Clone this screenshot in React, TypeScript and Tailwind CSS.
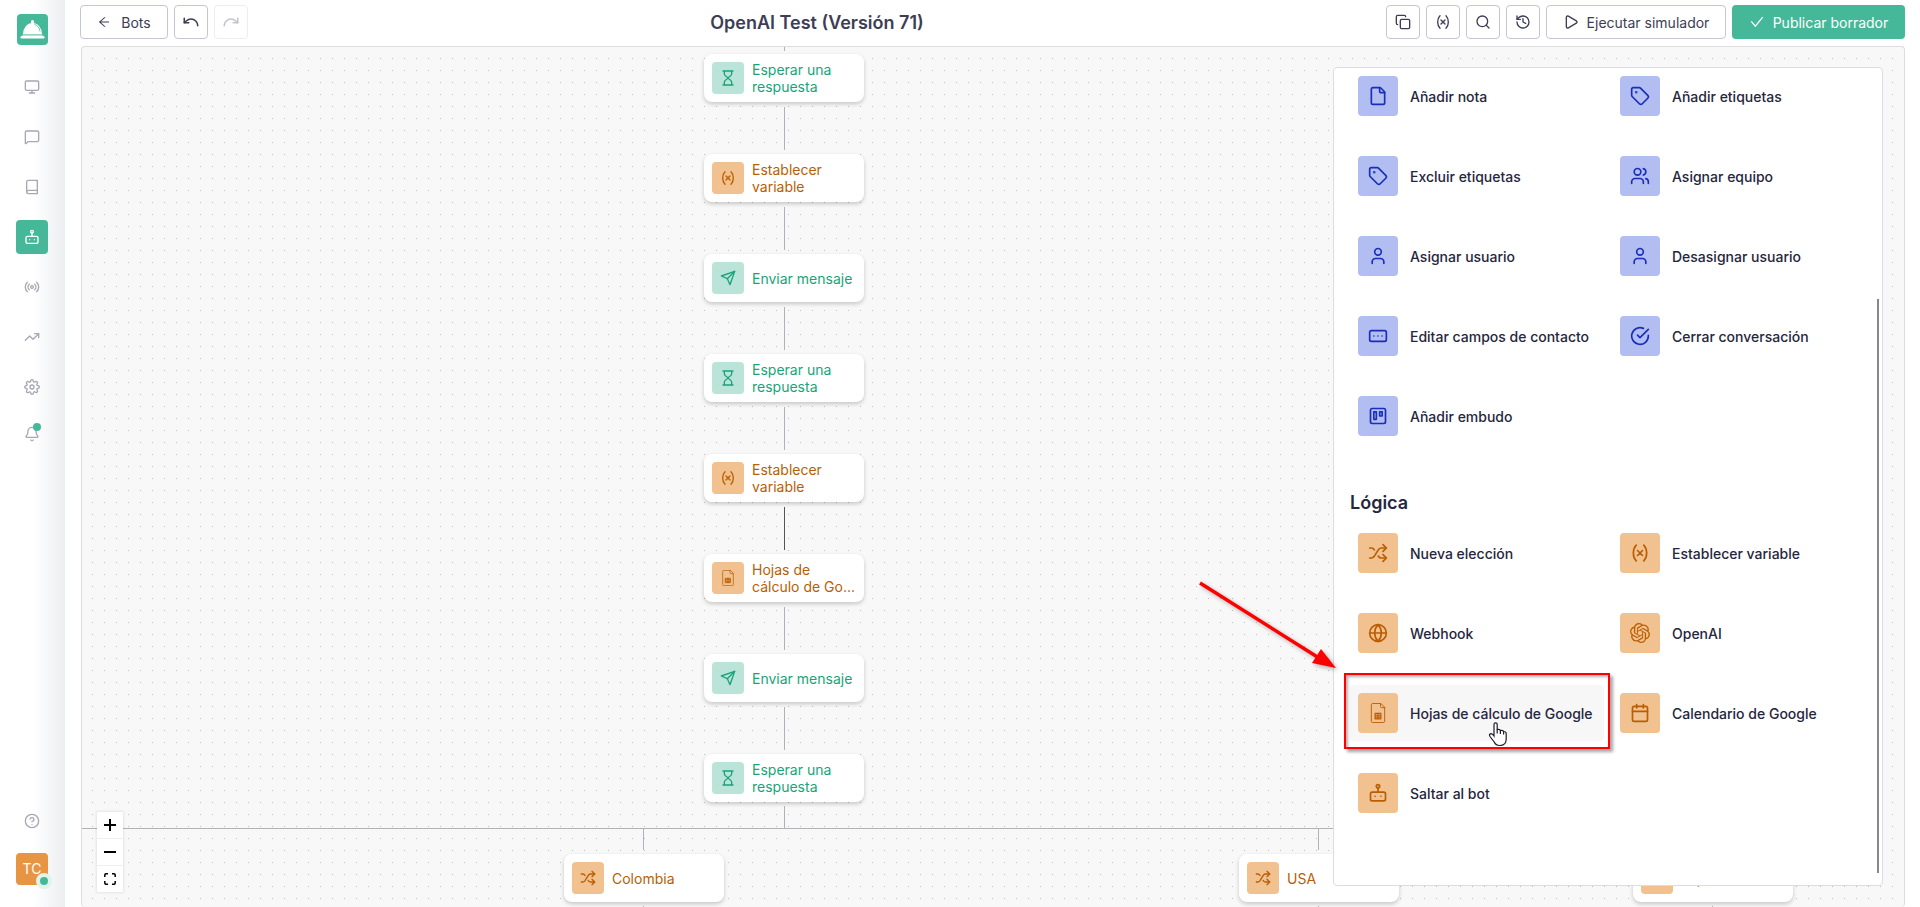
import type { ComponentType, ReactNode } from 'react';
import {
  Bell,
  Calendar,
  CircleHelp,
  Copy,
  File,
  Globe,
  History,
  MessageSquare,
  Monitor,
  Play,
  Redo,
  Search,
  Shuffle,
  Tag,
  TrendingUp,
  Trello,
  Undo,
  User,
  Users,
} from 'lucide-react';
import { AiOutlineArrowLeft, AiOutlineCheck } from 'react-icons/ai';
import { FiBook, FiCheckCircle, FiSend, FiSettings } from 'react-icons/fi';
import { SiOpenai } from 'react-icons/si';

type IconProps = { className?: string; size?: number; strokeWidth?: number };
type Icon = ComponentType<IconProps>;

function Svg({ size = 24, strokeWidth = 2, className, children }: IconProps & { children: ReactNode }) {
  return (
    <svg
      className={className}
      width={size}
      height={size}
      viewBox="0 0 24 24"
      fill="none"
      stroke="currentColor"
      strokeWidth={strokeWidth}
      strokeLinecap="round"
      strokeLinejoin="round"
    >
      {children}
    </svg>
  );
}

const BotIcon: Icon = (props) => (
  <Svg {...props}>
    <rect x="3" y="11" width="18" height="10.5" rx="2" />
    <circle cx="12" cy="4" r="2" />
    <path d="M12 6v5M8.500 16h.01M15.500 16h.01" />
  </Svg>
);

const BroadcastIcon: Icon = (props) => (
  <Svg {...props}>
    <circle cx="12" cy="12" r="2" />
    <path d="M16.2 7.8a6 6 0 0 1 0 8.4M7.8 16.2a6 6 0 0 1 0-8.4M19.1 4.9a10 10 0 0 1 0 14.2M4.9 19.1a10 10 0 0 1 0-14.2" />
  </Svg>
);

const HourglassIcon: Icon = (props) => (
  <Svg {...props}>
    <path d="M4.500 1.500h15M4.500 22.500h15M6.500 1.500v4.500c0 3 5.500 4.500 5.500 6s-5.500 3-5.500 6v4.500M17.500 1.500v4.500c0 3-5.500 4.500-5.500 6s5.500 3 5.500 6v4.500" />
  </Svg>
);

const VariableIcon: Icon = (props) => (
  <Svg {...props}>
    <path d="M7.500 21.500s-3.500-3.500-3.500-9.500 3.500-9.500 3.500-9.500M16.500 2.500s3.500 3.500 3.500 9.500-3.500 9.500-3.500 9.500M15 9l-6 6M9 9l6 6" />
  </Svg>
);

const FieldIcon: Icon = (props) => (
  <Svg {...props}>
    <rect x="2" y="5.5" width="20" height="13" rx="2" />
    <path d="M7 12h.01M12 12h.01M17 12h.01" />
  </Svg>
);

const SheetsIcon: Icon = ({ size, className }) => (
  <Svg size={size} className={className} strokeWidth={1.1}>
    <path d="M15 .600H5.500A1.500 1.500 0 0 0 4 2.100v19.800a1.500 1.500 0 0 0 1.500 1.500h13a1.500 1.500 0 0 0 1.500-1.500V5.600zM15 .600v3.500a1.500 1.500 0 0 0 1.500 1.500H20" />
    <path d="M8.500 12.500h7v6.500h-7zM8.500 14.700h7M8.500 16.900h7M12 12.500V19" strokeWidth="1.400" />
  </Svg>
);

const SendIcon: Icon = ({ size, className }) => <FiSend size={size} className={className} />;
const OpenAIIcon: Icon = ({ size, className }) => <SiOpenai size={size} className={className} />;
const CheckCircleIcon: Icon = ({ size, className }) => <FiCheckCircle size={size} className={className} />;
const BookIcon: Icon = ({ size }) => <FiBook size={size} />;
const SettingsIcon: Icon = ({ size }) => <FiSettings size={size} />;

const navItems: { label: string; icon: Icon; active?: boolean; dot?: boolean }[] = [
  { label: 'Panel', icon: Monitor },
  { label: 'Chats', icon: MessageSquare },
  { label: 'Contactos', icon: BookIcon },
  { label: 'Bots', icon: BotIcon, active: true },
  { label: 'Difusiones', icon: BroadcastIcon },
  { label: 'Informes', icon: TrendingUp },
  { label: 'Ajustes', icon: SettingsIcon },
  { label: 'Notificaciones', icon: Bell, dot: true },
];

type Tone = 'green' | 'orange' | 'blue';

const tones: Record<Tone, string> = {
  green: 'bg-[#bbe4d9] text-[#1aa37a]',
  orange: 'bg-[#f1c18f] text-[#b95e04]',
  blue: 'bg-[#b2bdf2] text-[#1a2fb8]',
};

type FlowNode = { x: number; y: number; label: string; icon: Icon; tone: Tone };

const WAIT = { label: 'Esperar una respuesta', icon: HourglassIcon, tone: 'green' as Tone };
const SET_VAR = { label: 'Establecer variable', icon: VariableIcon, tone: 'orange' as Tone };
const SEND = { label: 'Enviar mensaje', icon: SendIcon, tone: 'green' as Tone };
const SHEETS = { label: 'Hojas de cálculo\u00a0de\u00a0Go...', icon: SheetsIcon, tone: 'orange' as Tone };

const nodes: FlowNode[] = [
  ...[WAIT, SET_VAR, SEND, WAIT, SET_VAR, SHEETS, SEND, WAIT].map((n, i) => ({ ...n, x: 622, y: 7 + i * 100 })),
  { x: 482, y: 807, label: 'Colombia', icon: Shuffle, tone: 'orange' },
  { x: 1157, y: 807, label: 'USA', icon: Shuffle, tone: 'orange' },
  { x: 1551, y: 807, label: 'España', icon: Shuffle, tone: 'orange' },
];

const actions: { label: string; icon: Icon }[] = [
  { label: 'Añadir nota', icon: File },
  { label: 'Añadir etiquetas', icon: Tag },
  { label: 'Excluir etiquetas', icon: Tag },
  { label: 'Asignar equipo', icon: Users },
  { label: 'Asignar usuario', icon: User },
  { label: 'Desasignar usuario', icon: User },
  { label: 'Editar campos de contacto', icon: FieldIcon },
  { label: 'Cerrar conversación', icon: CheckCircleIcon },
  { label: 'Añadir embudo', icon: Trello },
];

const logic: { label: string; icon: Icon; hovered?: boolean }[] = [
  { label: 'Nueva elección', icon: Shuffle },
  { label: 'Establecer variable', icon: VariableIcon },
  { label: 'Webhook', icon: Globe },
  { label: 'OpenAI', icon: OpenAIIcon },
  { label: 'Hojas de cálculo de Google', icon: SheetsIcon, hovered: true },
  { label: 'Calendario de Google', icon: Calendar },
  { label: 'Saltar al bot', icon: BotIcon },
];

function Sidebar() {
  return (
    <aside className="flex w-[65px] shrink-0 flex-col items-center bg-linear-to-r from-white from-50% to-[#eceef0] pt-[14px] pr-px pb-[22px]">
      <a
        href="#"
        aria-label="Inicio"
        className="mb-[25px] flex size-[31px] items-center justify-center rounded bg-[#45b899] text-white"
      >
        <svg width="25" height="20" viewBox="0 0 25 20" fill="currentColor">
          <path d="M11 1.500a1.500 1.500 0 0 1 3 0V3h-3zM3 14a9.500 11 0 0 1 19 0z" />
          <path d="M14.500 4.500q5 1.500 5.500 7" fill="none" stroke="#45b899" strokeWidth="0.800" />
          <path d="M2.500 14.300h20v2h-20z" opacity="0.600" />
          <rect x="0.500" y="16" width="24" height="2.500" rx="1.200" />
        </svg>
      </a>
      <nav className="flex flex-col gap-4">
        {navItems.map(({ label, icon: NavIcon, active, dot }) => (
          <a
            key={label}
            href="#"
            aria-label={label}
            className={`relative flex w-8 items-center justify-center rounded ${dot ? 'h-7' : 'h-[34px]'} ${
              active ? 'bg-[#45b899] text-white' : 'text-[#a7a7b5]'
            }`}
          >
            <NavIcon size={16} strokeWidth={2} />
            {dot && <span className="absolute top-[3px] right-[7px] size-2 rounded-full bg-[#45b899]" />}
          </a>
        ))}
      </nav>
      <button aria-label="Ayuda" className="mt-auto text-[#a7a7b5]">
        <CircleHelp size={16} strokeWidth={2} />
      </button>
      <button className="relative mt-6 size-8 rounded bg-[#e89543] text-sm text-white">
        TC
        <span className="absolute -right-1 -bottom-1 size-4 rounded-full border-4 border-[#e0f3ed] bg-[#45b899]" />
      </button>
    </aside>
  );
}

const outline = 'flex h-[34px] items-center justify-center rounded border border-[#c5c5d3] bg-white text-[#3d3d55]';

function Header() {
  return (
    <header className="flex h-[46px] items-center justify-between px-[15px] pb-[2px]">
      <div className="flex gap-[6px]">
        <button className={`${outline} w-[88px] gap-[10px]`}>
          <AiOutlineArrowLeft size={14} />
          <span className="pt-[2px] text-sm">Bots</span>
        </button>
        <button aria-label="Deshacer" className={`${outline} w-[34px]`}>
          <Undo size={18} />
        </button>
        <button aria-label="Rehacer" disabled className={`${outline} w-[34px] opacity-30`}>
          <Redo size={18} />
        </button>
      </div>
      <h1 className="pt-[2px] text-lg font-semibold text-[#3d3d55]">OpenAI Test (Versión 71)</h1>
      <div className="flex gap-[6px]">
        <button aria-label="Copiar" className={`${outline} w-[34px]`}>
          <Copy size={16} />
        </button>
        <button aria-label="Variables" className={`${outline} w-[34px]`}>
          <VariableIcon size={16} />
        </button>
        <button aria-label="Buscar" className={`${outline} w-[34px]`}>
          <Search size={16} />
        </button>
        <button aria-label="Historial" className={`${outline} w-[34px]`}>
          <History size={16} />
        </button>
        <button className={`${outline} w-[180px] gap-2`}>
          <Play size={16} />
          <span className="pt-[2px] text-sm">Ejecutar simulador</span>
        </button>
        <button className="flex h-[34px] w-[173px] items-center justify-center gap-2 rounded bg-[#45b899] text-white">
          <AiOutlineCheck size={16} />
          <span className="pt-[2px] text-sm">Publicar borrador</span>
        </button>
      </div>
    </header>
  );
}

function NodeCard({ x, y, label, icon: NodeIcon, tone }: FlowNode) {
  return (
    <div
      className="absolute flex h-12 w-40 items-center gap-2 rounded-lg bg-white py-2 pr-1 pl-2 shadow-[0_2px_4px_rgba(0,0,0,0.2)]"
      style={{ left: x, top: y }}
    >
      <span className={`flex size-8 shrink-0 items-center justify-center rounded ${tones[tone]}`}>
        <NodeIcon size={16} strokeWidth={2} />
      </span>
      <span className={`text-sm leading-[17px] ${tone === 'green' ? 'text-[#1aa37a]' : 'text-[#b95e04]'}`}>
        {label}
      </span>
    </div>
  );
}

function Edges() {
  return (
    <svg className="absolute inset-0 size-full">
      <defs>
        <pattern id="dots" x="10" y="11" width="12" height="12" patternUnits="userSpaceOnUse">
          <rect width="1" height="1" fill="#bcbcc4" />
        </pattern>
      </defs>
      <rect width="100%" height="100%" fill="url(#dots)" />
      <g stroke="#b1b1b7">
        <path d="M702.500 0v4" />
        {[0, 1, 2, 3, 5, 6].map((i) => (
          <path key={i} d={`M702.500 ${60 + i * 100}v43`} />
        ))}
        <path d="M702.500 460v43" stroke="#555" />
        <path d="M702.500 759v22M0 781.500h1631M561.500 782v21M1236.500 782v21M1630.500 782v21M561.500 859v4M1236.500 859v4M1630.500 859v4" />
      </g>
    </svg>
  );
}

function ZoomControls() {
  const base = 'flex size-[26px] items-center justify-center bg-white text-black';
  return (
    <div className="absolute bottom-[15px] left-[15px] flex flex-col gap-px bg-[#eee] shadow-[0_0_2px_1px_rgba(0,0,0,0.08)]">
      <button aria-label="Acercar" className={base}>
        <svg width="12" height="12" viewBox="0 0 12 12" fill="currentColor">
          <path d="M5 0h2v5h5v2H7v5H5V7H0V5h5z" />
        </svg>
      </button>
      <button aria-label="Alejar" className={base}>
        <svg width="12" height="2" viewBox="0 0 12 2" fill="currentColor">
          <path d="M0 0h12v2H0z" />
        </svg>
      </button>
      <button aria-label="Ajustar vista" className={base}>
        <svg width="12" height="12" viewBox="0 0 12 12" fill="none" stroke="currentColor" strokeWidth="1.500">
          <path d="M.8 4V2Q.8.800 2 .800h2M8 .800h2q1.200 0 1.200 1.200v2M11.200 8v2q0 1.200-1.200 1.200H8M4 11.200H2Q.8 11.200.8 10V8" />
        </svg>
      </button>
    </div>
  );
}

function PanelItem({ label, icon: ItemIcon, tone, hovered }: { label: string; icon: Icon; tone: Tone; hovered?: boolean }) {
  return (
    <button className={`relative flex h-14 items-center gap-3 rounded p-2 text-left ${hovered ? 'bg-[#f7f7f8]' : ''}`}>
      <span className={`flex size-10 shrink-0 items-center justify-center rounded ${tones[tone]}`}>
        <ItemIcon size={20} strokeWidth={2} />
      </span>
      <span className="whitespace-nowrap pt-[2px] text-sm font-medium text-[#26263d]">{label}</span>
      {hovered && <Highlight />}
    </button>
  );
}

// red frame, arrow and hand pointer over the hovered item
function Highlight() {
  return (
    <>
      <span className="absolute -inset-x-[6px] -top-3 -bottom-2 border-2 border-[#f00] shadow-[3px_3px_3px_rgba(0,0,0,0.35),inset_2px_2px_3px_rgba(0,0,0,0.3)]" />
      <svg
        className="absolute -top-[106px] -left-[154px] drop-shadow-[2px_2px_2px_rgba(0,0,0,0.3)]"
        width="144"
        height="94"
        viewBox="0 0 144 94"
      >
        <path d="M4 4l119 75" stroke="#f00" strokeWidth="3.500" />
        <path d="M140 89l-24-5 9-14z" fill="#f00" />
      </svg>
      <svg className="absolute top-9 left-[138px]" width="20" height="26" viewBox="0 0 20 26">
        <path
          d="M6 15V3.500a1.600 1.600 0 0 1 3.200 0V8.500q2.800-.6 3.200 1 2.800-.6 3.200 1 2.600 0 2.600 2V18q0 6.500-6.500 6.500-4 0-5.500-3.500L2 15.500q-1.500-2.500 1-2.800 1.500 0 3 2.300z"
          fill="#fff"
          stroke="#1c1c2b"
          strokeWidth="1.200"
        />
        <path d="M9.200 8.500v4M12.400 9.500v3.500M15.600 10.500v3" stroke="#1c1c2b" strokeWidth="1.200" />
      </svg>
    </>
  );
}

function ActionPanel() {
  return (
    <section className="absolute top-5 right-[21px] bottom-[21px] w-[550px] rounded border border-[#dcdce2] bg-white px-4">
      <div className="grid grid-cols-2 gap-x-2 gap-y-6">
        {actions.map((item) => (
          <PanelItem key={item.label} tone="blue" {...item} />
        ))}
      </div>
      <h2 className="mt-[45px] mb-2 text-lg font-semibold text-[#26263d]">Lógica</h2>
      <div className="grid grid-cols-2 gap-x-2 gap-y-6">
        {logic.map((item) => (
          <PanelItem key={item.label} tone="orange" {...item} />
        ))}
      </div>
      <span className="absolute top-[231px] right-[3px] bottom-3 w-[2px] bg-[#888]" />
    </section>
  );
}

export default function App() {
  return (
    <div className="flex h-screen overflow-hidden bg-white font-['Inter','Liberation_Sans',sans-serif]">
      <Sidebar />
      <div className="flex min-w-0 flex-1 flex-col">
        <Header />
        <main className="relative mr-[15px] ml-4 flex-1 overflow-hidden rounded border border-b-0 border-[#dcdce2] bg-[#f8f8f8]">
          <Edges />
          {nodes.map((node, i) => (
            <NodeCard key={i} {...node} />
          ))}
          <ZoomControls />
          <ActionPanel />
        </main>
      </div>
    </div>
  );
}
